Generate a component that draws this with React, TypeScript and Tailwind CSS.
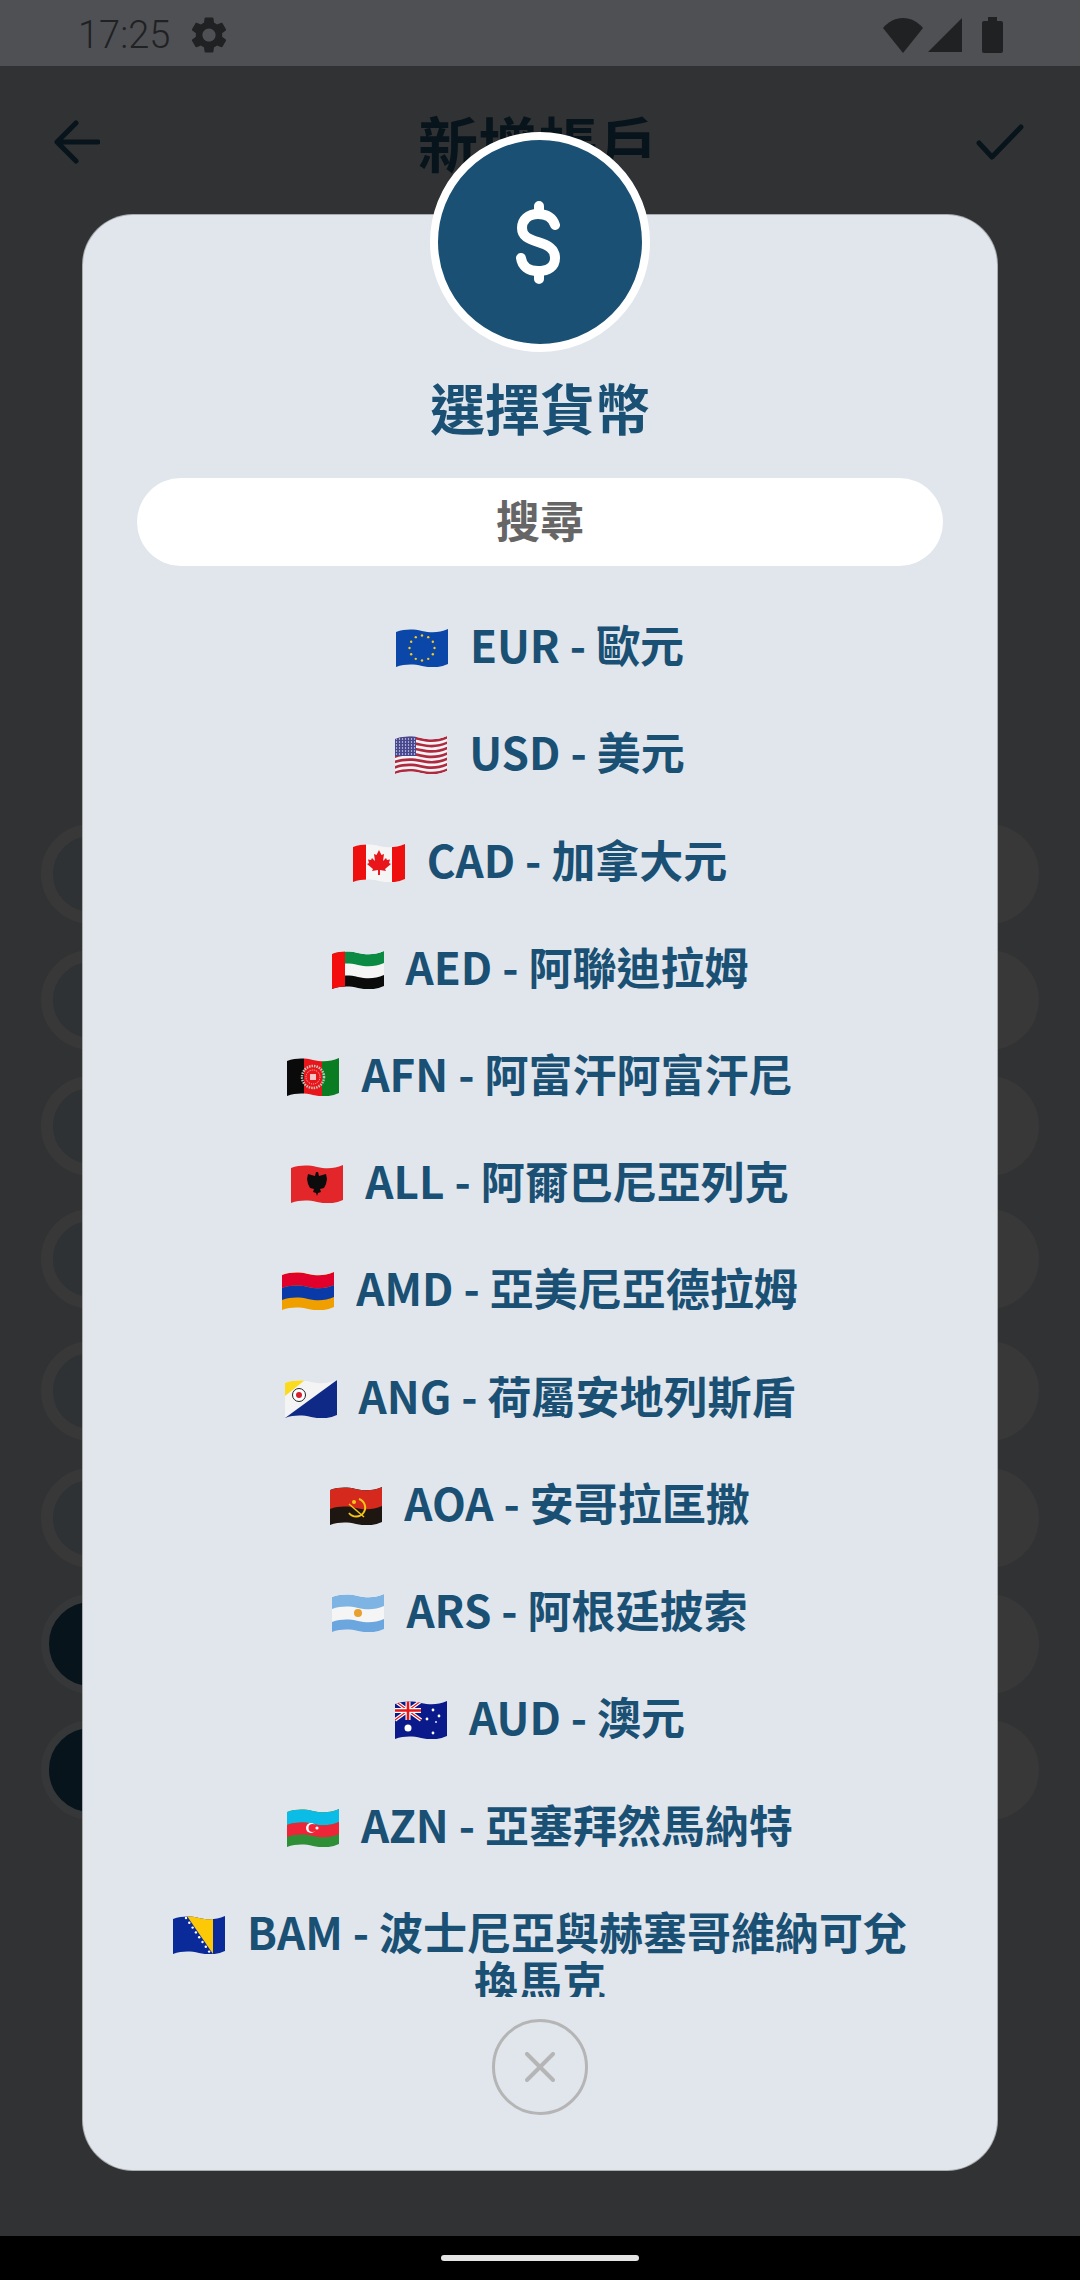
import React, { useId } from 'react';

const CJK = "font-['Noto_Sans_CJK_TC','Noto_Sans',sans-serif]";

const CURRENCIES = [
  { code: 'EUR', label: '歐元' },
  { code: 'USD', label: '美元' },
  { code: 'CAD', label: '加拿大元' },
  { code: 'AED', label: '阿聯迪拉姆' },
  { code: 'AFN', label: '阿富汗阿富汗尼' },
  { code: 'ALL', label: '阿爾巴尼亞列克' },
  { code: 'AMD', label: '亞美尼亞德拉姆' },
  { code: 'ANG', label: '荷屬安地列斯盾' },
  { code: 'AOA', label: '安哥拉匡撒' },
  { code: 'ARS', label: '阿根廷披索' },
  { code: 'AUD', label: '澳元' },
  { code: 'AZN', label: '亞塞拜然馬納特' },
  { code: 'BAM', label: '波士尼亞與赫塞哥維納可兌換馬克' },
];

// horizontal band following the wave of the flag
const band = (y0: number, y1: number) =>
  `M0 ${y0 + 3} C9 ${y0} 17 ${y0} 26 ${y0 + 2} S43 ${y0 + 4} 52 ${y0} V${y1} C43 ${y1 + 4} 35 ${y1 + 4} 26 ${y1 + 2} S9 ${y1} 0 ${y1 + 3} Z`;

const stars = (cx: number, cy: number, r: number, n: number, s: number, fill: string) =>
  Array.from({ length: n }, (_, i) => {
    const a = (i / n) * Math.PI * 2;
    return <circle key={i} cx={cx + Math.cos(a) * r} cy={cy + Math.sin(a) * r} r={s} fill={fill} />;
  });

const FLAG_ART: Record<string, React.ReactNode> = {
  EUR: (
    <>
      <rect width="52" height="38" fill="#0a47a8" />
      {stars(26, 19, 12.5, 12, 1.2, '#f8c91c')}
    </>
  ),
  USD: (
    <>
      <rect width="52" height="38" fill="#f4f4f6" />
      {[0, 5.4, 10.8, 16.2, 21.6, 27, 32.4].map((y) => (
        <path key={y} d={band(y, y + 2.7)} fill="#b02a3f" />
      ))}
      <rect width="21" height="20" fill="#47478f" />
      {Array.from({ length: 42 }, (_, i) => (
        <circle key={i} cx={1.5 + (i % 7) * 3} cy={3 + Math.floor(i / 7) * 3} r="0.7" fill="#e4e4f0" />
      ))}
    </>
  ),
  CAD: (
    <>
      <rect width="52" height="38" fill="#f5f5f5" />
      <rect width="13" height="38" fill="#ee0f0f" />
      <rect x="39" width="13" height="38" fill="#ee0f0f" />
      <path
        d="M26 6 L28.5 11 L31 10 L30 17 L33 14 L34 16 L37 15.5 L36 19 L38 20 L32 25 L33 27 L27 26 V31 H25 V26 L19 27 L20 25 L14 20 L16 19 L15 15.5 L18 16 L19 14 L22 17 L21 10 L23.5 11 Z"
        fill="#e8161a"
      />
    </>
  ),
  AED: (
    <>
      <rect width="52" height="38" fill="#f5f5f5" />
      <path d={band(0, 12)} fill="#0a8a43" />
      <path d={band(24, 38)} fill="#0b0b0b" />
      <rect width="13" height="38" fill="#f30d0d" />
    </>
  ),
  AFN: (
    <>
      <rect width="17" height="38" fill="#0a0a0a" />
      <rect x="17" width="18" height="38" fill="#e8161a" />
      <rect x="35" width="17" height="38" fill="#0a7d22" />
      <circle cx="26" cy="19" r="11" fill="none" stroke="#c9c2b8" strokeWidth="2.5" strokeDasharray="1.5 1" />
      <circle cx="26" cy="19" r="7" fill="none" stroke="#f7c5c8" strokeWidth="1" strokeDasharray="1 1" />
      <rect x="23" y="16" width="6" height="6" fill="#f7c5c8" />
    </>
  ),
  ALL: (
    <>
      <rect width="52" height="38" fill="#e3262a" />
      <path
        d="M25 7 L27 7 L28 11 L35 9 L36 14 L35 19 L33 23 L29 24 L30 27 L27 28 L26 31 L25 28 L22 27 L23 24 L19 23 L17 19 L16 14 L17 9 L24 11 Z"
        fill="#0c0c0c"
      />
    </>
  ),
  AMD: (
    <>
      <rect width="52" height="38" fill="#ef9f00" />
      <path d={band(0, 13)} fill="#e0002b" />
      <path d={band(13, 25)} fill="#0a3aa8" />
    </>
  ),
  ANG: (
    <>
      <rect width="52" height="38" fill="#f4f4f4" />
      <path d="M52 0 V38 H0 Z" fill="#0f2a86" />
      <path d="M0 0 H20 L0 16 Z" fill="#fadb1e" />
      <circle cx="14" cy="15" r="6.5" fill="#fff" stroke="#222" strokeWidth="1" />
      <circle cx="14" cy="15" r="3" fill="#d81e2c" />
    </>
  ),
  AOA: (
    <>
      <rect width="52" height="38" fill="#1d1611" />
      <path d={band(0, 19)} fill="#d4291c" />
      <path d="M29 12 A9 9 0 1 1 19 26" fill="none" stroke="#f5c518" strokeWidth="2" />
      <path d="M19 17 L34 30" stroke="#f5c518" strokeWidth="1.5" />
      <circle cx="24" cy="15" r="2" fill="#f5c518" />
    </>
  ),
  ARS: (
    <>
      <rect width="52" height="38" fill="#f5f5f5" />
      <path d={band(0, 12)} fill="#7eb4e4" />
      <path d={band(25, 38)} fill="#6ba6de" />
      <circle cx="26" cy="19" r="4" fill="#e8a12e" />
    </>
  ),
  AUD: (
    <>
      <rect width="52" height="38" fill="#0a1a8a" />
      <path d="M0 0 L26 19 M26 0 L0 19" stroke="#fff" strokeWidth="3.5" />
      <path d="M0 0 L26 19 M26 0 L0 19" stroke="#e8161a" strokeWidth="1.2" />
      <path d="M13 0 V19 M0 9.5 H26" stroke="#fff" strokeWidth="5" />
      <path d="M13 0 V19 M0 9.5 H26" stroke="#e8161a" strokeWidth="2.6" />
      <circle cx="13" cy="27" r="3.5" fill="#fff" />
      <circle cx="38" cy="9" r="1.4" fill="#fff" />
      <circle cx="32" cy="18" r="1.4" fill="#fff" />
      <circle cx="44" cy="15" r="1.4" fill="#fff" />
      <circle cx="41" cy="21" r="0.9" fill="#fff" />
      <circle cx="38" cy="32" r="1.4" fill="#fff" />
    </>
  ),
  AZN: (
    <>
      <rect width="52" height="38" fill="#2f8f36" />
      <path d={band(0, 13)} fill="#0bbce6" />
      <path d={band(13, 25)} fill="#ee2438" />
      <circle cx="24" cy="19" r="5" fill="#fff" />
      <circle cx="25.5" cy="19" r="4" fill="#ee2438" />
      <circle cx="30" cy="19" r="1.6" fill="#fff" />
    </>
  ),
  BAM: (
    <>
      <rect width="52" height="38" fill="#0a2a9a" />
      <path d="M14 0 H40 V38 Z" fill="#fdc806" />
      {[0, 1, 2, 3, 4, 5, 6, 7].map((i) => (
        <circle key={i} cx={13 + i * 3.3} cy={2 + i * 4.8} r="1.2" fill="#fff" />
      ))}
    </>
  ),
};

const Flag = ({ code }: { code: string }) => {
  const id = useId();
  return (
    <svg viewBox="0 0 52 38" className="mr-[22px] inline-block h-[38px] w-[52px] align-[-4px]">
      <clipPath id={id}>
        <path d={band(0, 35)} />
      </clipPath>
      <g clipPath={`url(#${id})`}>{FLAG_ART[code]}</g>
    </svg>
  );
};

const StatusBar = () => (
  <div className="flex h-[66px] items-center justify-between bg-[#4f5054] pt-[4px] pr-[77px] pl-[78px] text-[#1f2123]">
    <div className="flex items-center gap-[17px]">
      <span className="font-['Roboto',sans-serif] text-[38px] leading-none font-light">17:25</span>
      <svg viewBox="0 0 24 24" className="h-[44px] w-[44px]" fill="currentColor">
        <path d="M19.14 12.94c.04-.3.06-.61.06-.94 0-.32-.02-.64-.07-.94l2.03-1.58c.18-.14.23-.41.12-.61l-1.92-3.32c-.12-.22-.37-.29-.59-.22l-2.39.96c-.5-.38-1.03-.7-1.62-.94l-.36-2.54c-.04-.24-.24-.41-.48-.41h-3.84c-.24 0-.43.17-.47.41l-.36 2.54c-.59.24-1.13.57-1.62.94l-2.39-.96c-.22-.08-.47 0-.59.22L2.74 8.87c-.12.21-.08.47.12.61l2.03 1.58c-.05.3-.09.63-.09.94s.02.64.07.94l-2.03 1.58c-.18.14-.23.41-.12.61l1.92 3.32c.12.22.37.29.59.22l2.39-.96c.5.38 1.03.7 1.62.94l.36 2.54c.05.24.24.41.48.41h3.84c.24 0 .44-.17.47-.41l.36-2.54c.59-.24 1.13-.56 1.62-.94l2.39.96c.22.08.47 0 .59-.22l1.92-3.32c.12-.22.07-.47-.12-.61l-2.01-1.58zM12 15.6c-1.98 0-3.6-1.62-3.6-3.6s1.62-3.6 3.6-3.6 3.6 1.62 3.6 3.6-1.62 3.6-3.6 3.6z" />
      </svg>
    </div>
    <div className="flex items-center">
      <svg viewBox="0 0 40 35" className="h-[35px] w-[40px]" fill="currentColor">
        <path d="M20 35 L0 10 C5 4 12 0 20 0 S35 4 40 10 Z" />
      </svg>
      <svg viewBox="0 0 34 34" className="ml-[5px] h-[34px] w-[34px]" fill="currentColor">
        <path d="M34 0 V34 H0 Z" />
      </svg>
      <svg viewBox="0 0 21 36" className="ml-[20px] h-[36px] w-[21px]" fill="currentColor">
        <path d="M6 0 H15 V4 H19 A2 2 0 0 1 21 6 V34 A2 2 0 0 1 19 36 H2 A2 2 0 0 1 0 34 V6 A2 2 0 0 1 2 4 H6 Z" />
      </svg>
    </div>
  </div>
);

const AppBar = () => (
  <div className="flex h-[152px] items-center justify-between pr-[56px] pl-[54px] text-[#07141b]">
    <svg viewBox="0 0 46 44" className="h-[44px] w-[46px]" fill="none" stroke="currentColor" strokeWidth="5" strokeLinecap="round" strokeLinejoin="round">
      <path d="M44 22 H4 M22 3 L3 22 L22 41" />
    </svg>
    <span className={`${CJK} text-[60px] leading-none font-bold`}>新增帳戶</span>
    <svg viewBox="0 0 48 36" className="h-[36px] w-[48px]" fill="none" stroke="currentColor" strokeWidth="5" strokeLinecap="round" strokeLinejoin="round">
      <path d="M3 19 L16 33 L45 3" />
    </svg>
  </div>
);

// dimmed form rows that show at both sides of the modal
const FormRows = () => (
  <div className="flex flex-col gap-[26.3px] px-[41px] pt-[605.5px]">
    {['a', 'b', 'c', 'd', 'e', 'f', 'g', 'h'].map((row, i) => (
      <div key={row} className={i === 3 || i === 4 ? 'mt-[6.3px] flex h-[100px] justify-end' : 'flex h-[100px] justify-end'}>
        <div
          className={
            i < 6
              ? 'h-full w-[400px] grow rounded-[50px] border-[12px] border-[#383838] bg-[#2e3234]'
              : 'h-full w-[400px] grow rounded-[50px] border-[8px] border-[#363738] bg-[#07141b]'
          }
        />
        <div className="h-full w-[300px] rounded-[50px] bg-[#383838]" />
      </div>
    ))}
  </div>
);

const CurrencyModal = () => (
  <div className="absolute top-[215px] left-[83px] flex h-[1955px] w-[914px] flex-col items-center rounded-[50px] bg-[#e1e6ed] pt-[161px] ring-1 ring-[#a9abaf]">
    <div className="absolute -top-[83px] flex h-[220px] w-[220px] items-center justify-center rounded-full border-[8px] border-white bg-[#1a5073]">
      <svg viewBox="0 0 44 83" className="mr-[4px] h-[83px] w-[44px]" fill="none" stroke="white" strokeWidth="10" strokeLinecap="round">
        <path d="M23 5 V13 M23 70 V78" />
        <path d="M39 24 C37 17 31 13 22 13 C12 13 6 19 6 27 C6 35 12 38 22 41 C32 44 39 48 39 57 C39 65 33 70 22 70 C12 70 6 65 5 57" />
      </svg>
    </div>
    <h1 className={`${CJK} text-[55px] leading-[60px] font-bold text-[#1a5073]`}>選擇貨幣</h1>
    <div className={`${CJK} mt-[42px] flex h-[88px] w-[806px] items-center justify-center rounded-full bg-white pb-[6px] text-[44px] font-bold text-[#666666]`}>
      搜尋
    </div>
    <div className="mt-[25px] h-[1406px] w-[760px] overflow-hidden">
      {CURRENCIES.map(({ code, label }) => (
        <p key={code} className={`${CJK} py-[29.12px] text-center text-[44px] leading-[49px] font-bold text-[#1a5073]`}>
          <Flag code={code} />
          {code} - {label}
        </p>
      ))}
    </div>
    <div className="mt-[22px] flex h-[96px] w-[96px] items-center justify-center rounded-full border-[3px] border-[#b5b5b5]">
      <svg viewBox="0 0 30 30" className="h-[30px] w-[30px]" fill="none" stroke="#b5b5b5" strokeWidth="4" strokeLinecap="round">
        <path d="M2 2 L28 28 M28 2 L2 28" />
      </svg>
    </div>
  </div>
);

export default function App() {
  return (
    <div className="relative flex h-[2280px] w-[1080px] flex-col overflow-hidden bg-[#313234]">
      <StatusBar />
      <AppBar />
      <div className="grow">
        <FormRows />
      </div>
      <div className="flex h-[44px] items-center justify-center bg-black">
        <div className="h-[6px] w-[198px] rounded-full bg-[#e4e4e4]" />
      </div>
      <CurrencyModal />
    </div>
  );
}
